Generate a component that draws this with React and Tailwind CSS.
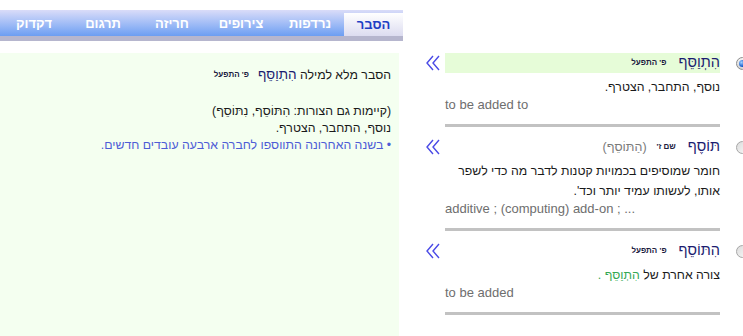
import React from "react";

const tabs = [
  { label: "הסבר", w: "w-[59px]", active: true },
  { label: "נרדפות", w: "w-[68px]" },
  { label: "צירופים", w: "w-[70px]" },
  { label: "חריזה", w: "w-[68px]" },
  { label: "תרגום", w: "w-[70px]" },
  { label: "דקדוק", w: "w-[68px]" },
];

function Chevrons() {
  return (
    <svg width="14" height="16" viewBox="0 0 14 16" fill="none">
      <polyline points="7,1 1,8 7,15" stroke="#4a4ae6" strokeWidth="1.4" />
      <polyline points="13,1 7,8 13,15" stroke="#4a4ae6" strokeWidth="1.4" />
    </svg>
  );
}

function Radio({ checked }) {
  if (checked) {
    return (
      <div className="w-[13px] h-[13px] rounded-full border border-[#8c8c8c] bg-gradient-to-b from-[#f4f4f4] to-[#d4d4d4] flex items-center justify-center">
        <div className="w-[7px] h-[7px] rounded-full bg-[radial-gradient(circle_at_35%_35%,#9fd0ff,#1a5ed0_60%,#103a90)]" />
      </div>
    );
  }
  return (
    <div className="w-[13px] h-[13px] rounded-full border border-[#a6a6a6] bg-gradient-to-br from-[#dcdcdc] to-[#f8f8f8]" />
  );
}

function Entry({ checked, highlight, head, label, extra, def, en, first }) {
  return (
    <div className={`flex items-start ${first ? "" : "mt-[10px]"}`}>
      <div className="w-[40px] h-[20px] pl-[21px] flex items-center shrink-0">
        <Chevrons />
      </div>
      <div className="w-[275px] shrink-0">
        <div
          dir="rtl"
          className={`h-[20px] flex items-center ${highlight ? "bg-[#e6fcd8]" : ""}`}
        >
          <span className="text-[14.5px] text-[#1c1c70]">{head}</span>
          <span className="text-[8px] font-bold text-[#202040] mr-[12px]">{label}</span>
          {extra && <span className="text-[12.5px] text-[#7a7a7a] mr-[10px]">{extra}</span>}
        </div>
        <div dir="rtl" className="text-right whitespace-nowrap text-[12.3px] leading-[20px] text-[#1a1a1a] mt-[4px]">
          {def}
        </div>
        <div dir="ltr" className="text-left text-[13px] leading-[16px] text-[#6e6e6e] pb-[11px]">
          {en}
        </div>
        <div className="h-[3px] bg-[#c2c2c2]" />
      </div>
      <div className="w-[16px] shrink-0" />
      <div className="h-[20px] flex items-center shrink-0">
        <Radio checked={checked} />
      </div>
    </div>
  );
}

export default function App() {
  return (
    <div className="w-[743px] h-[336px] overflow-hidden bg-white flex font-['Liberation_Sans','DejaVu_Sans',sans-serif]">
      {/* Left panel: tabs + explanation */}
      <div className="w-[405px] shrink-0">
        <div className="h-[10px]" />
        <div
          dir="rtl"
          className="w-[403px] h-[26px] flex bg-gradient-to-b from-[#dadcf8] to-[#6c9ef2]"
        >
          {tabs.map((t) =>
            t.active ? (
              <div
                key={t.label}
                className={`${t.w} h-[23px] mt-[3px] flex items-center justify-center bg-gradient-to-b from-white to-[#dcdcf0] text-[13px] font-bold text-[#1f3fc4]`}
              >
                {t.label}
              </div>
            ) : (
              <div
                key={t.label}
                className={`${t.w} h-[26px] pt-[1px] flex items-center justify-center text-[13px] font-bold text-white`}
              >
                {t.label}
              </div>
            )
          )}
        </div>
        <div className="w-[403px] h-[5px] bg-[#b6b6ce]" />
        <div className="h-[12px]" />
        <div dir="rtl" className="w-[399px] h-[283px] bg-[#f4fff0] pr-[8px] pt-[12px] text-[12.3px] text-[#1a1a1a]">
          <div className="h-[20px] flex items-center">
            <span className="text-[12.3px]">
              הסבר מלא למילה <span className="text-[13.5px] text-[#1c1c70]">הִתְוַסֵּף</span>
            </span>
            <span className="text-[8px] font-bold text-[#202040] mr-[9px]">פ' התפעל</span>
          </div>
          <div className="mt-[18px] leading-[17px] whitespace-nowrap">
            <div>(קיימות גם הצורות: הִתּוֹסֵף, נִתּוֹסֵף)</div>
            <div>נוסף, התחבר, הצטרף.</div>
            <div className="text-[#4d5cd6]">• בשנה האחרונה התווספו לחברה ארבעה עובדים חדשים.</div>
          </div>
        </div>
      </div>

      {/* Right column: entries */}
      <div className="pt-[53px]">
        <Entry
          first
          checked
          highlight
          head="הִתְוַסֵּף"
          label="פ' התפעל"
          def="נוסף, התחבר, הצטרף."
          en="to be added to"
        />
        <Entry
          head="תּוֹסֶף"
          label="שם ז'"
          extra="(הַתּוֹסֵף)"
          def={
            <>
              חומר שמוסיפים בכמויות קטנות לדבר מה כדי לשפר
              <br />
              אותו, לעשותו עמיד יותר וכד'.
            </>
          }
          en="additive ; (computing) add-on ; ..."
        />
        <Entry
          head="הִתּוֹסֵף"
          label="פ' התפעל"
          def={
            <>
              צורה אחרת של <span className="text-[#35a853]">הִתְוַסֵּף .</span>
            </>
          }
          en="to be added"
        />
      </div>
    </div>
  );
}
